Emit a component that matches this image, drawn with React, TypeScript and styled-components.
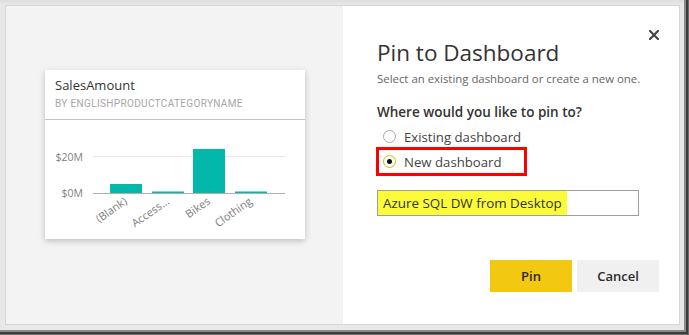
import React from "react";
import styled, { createGlobalStyle } from "styled-components";

const Global = createGlobalStyle`
  html, body { margin: 0; padding: 0; background: #ffffff; }
  body { font-family: "Open Sans", "Noto Sans", Arial, sans-serif; }
  * { box-sizing: border-box; }
`;

const Frame = styled.div`
  width: 689px;
  height: 335px;
  padding: 5px 9px 10px 5px;
  background: linear-gradient(180deg, #dedede 0px, #e8e8e8 5px, #e8e8e8 100%);
  box-shadow: inset -1px -1px 0 #6a6a6a, inset -3px -3px 0 #3c3c3c,
    inset -5px -5px 0 #8a8a8a;
  display: flex;
`;

const Screen = styled.div`
  flex: 1;
  display: flex;
  border: 1px solid #d6d6d6;
  background: #f3f3f3;
  overflow: hidden;
`;

const LeftPane = styled.div`
  width: 337px;
  background: #f3f3f3;
  padding: 64px 0 0 39px;
`;

const Card = styled.div`
  width: 260px;
  height: 169px;
  background: #ffffff;
  box-shadow: 0 2px 6px rgba(0, 0, 0, 0.22);
  display: flex;
  flex-direction: column;
`;

const CardHeader = styled.div`
  padding: 7px 10px 9px 10px;
  border-bottom: 1px solid #c4c4c4;
`;

const CardTitle = styled.div`
  font-family: "Open Sans", sans-serif;
  font-size: 13px;
  line-height: 17px;
  color: #333333;
`;

const CardSubtitle = styled.div`
  margin-top: 4px;
  font-family: Roboto, "Liberation Sans", sans-serif;
  font-size: 10px;
  line-height: 12px;
  letter-spacing: 0.35px;
  color: #a6a6a6;
  text-transform: uppercase;
`;

const ChartSvg = styled.svg`
  display: block;
  flex: 1;
`;

const Dialog = styled.div`
  flex: 1;
  background: #ffffff;
  padding: 22px 20px 0 34px;
  display: flex;
  flex-direction: column;
`;

const CloseRow = styled.div`
  display: flex;
  justify-content: flex-end;
  height: 10px;
`;

const CloseButton = styled.button`
  width: 10px;
  height: 10px;
  padding: 0;
  border: none;
  background: none;
  display: block;
  cursor: pointer;
`;

const Title = styled.h1`
  margin: 0;
  font-family: "Open Sans", sans-serif;
  font-weight: 400;
  font-size: 22.5px;
  line-height: 30px;
  color: #333333;
`;

const Subtitle = styled.p`
  margin: 3px 0 0 0;
  font-size: 11.4px;
  line-height: 15px;
  color: #666666;
`;

const Question = styled.div`
  margin-top: 17px;
  font-size: 13.5px;
  font-weight: 600;
  line-height: 18px;
  color: #333333;
`;

const Options = styled.div`
  margin-top: 4px;
  display: flex;
  flex-direction: column;
  align-items: flex-start;
  gap: 2px;
`;

const OptionRow = styled.label<{ $marked?: boolean }>`
  display: flex;
  align-items: center;
  gap: 8px;
  height: 23px;
  margin-left: 2px;
  padding: 0 22px 0 4px;
  font-size: 13.2px;
  color: #444444;
  outline: ${(p) => (p.$marked ? "3px solid #ff0000" : "none")};
`;

const Radio = styled.span<{ $checked?: boolean }>`
  width: 13px;
  height: 13px;
  border-radius: 50%;
  border: 1.5px solid ${(p) => (p.$checked ? "#e8b10a" : "#a8a8a8")};
  display: flex;
  align-items: center;
  justify-content: center;
  background: #ffffff;
  &::after {
    content: "";
    width: 5px;
    height: 5px;
    border-radius: 50%;
    background: ${(p) => (p.$checked ? "#111111" : "transparent")};
  }
`;

const TextBox = styled.div`
  margin-top: 17px;
  width: 262px;
  height: 26px;
  border: 1px solid #9e9e9e;
  display: flex;
  align-items: stretch;
`;

const Highlight = styled.span`
  background: #fbfb3a;
  padding: 0 5px 0 5px;
  display: flex;
  align-items: center;
  font-size: 13.4px;
  color: #333333;
`;

const Buttons = styled.div`
  margin-top: 44px;
  display: flex;
  justify-content: flex-end;
  gap: 5px;
`;

const Button = styled.button<{ $primary?: boolean }>`
  width: 82px;
  height: 32px;
  border: none;
  font-family: "Open Sans", sans-serif;
  font-size: 13px;
  font-weight: 600;
  color: #2b2b2b;
  background: ${(p) => (p.$primary ? "#f2c811" : "#f0f0f0")};
`;

const bars = [
  { label: "(Blank)", x: 65, top: 64 },
  { label: "Access...", x: 107, top: 71.5 },
  { label: "Bikes", x: 148, top: 29 },
  { label: "Clothing", x: 190, top: 71.5 },
];

function Chart() {
  return (
    <ChartSvg width="260" height="119" viewBox="0 0 260 119">
      <line x1="48" y1="36.5" x2="240" y2="36.5" stroke="#e8e8e8" strokeWidth="1" />
      <text x="38" y="40.5" textAnchor="end" fontSize="10.5" fill="#808080" fontFamily="Open Sans, sans-serif">
        $20M
      </text>
      <text x="38" y="77" textAnchor="end" fontSize="10.5" fill="#808080" fontFamily="Open Sans, sans-serif">
        $0M
      </text>
      {bars.map((b) => (
        <rect key={b.label} x={b.x} y={b.top} width="32" height={73 - b.top} fill="#01b8aa" />
      ))}
      <line x1="48" y1="73.5" x2="240" y2="73.5" stroke="#b0b0b0" strokeWidth="1" />
      {bars.map((b) => (
        <text
          key={b.label + "-l"}
          x={b.x + 18}
          y={83}
          textAnchor="end"
          fontSize="11"
          fill="#808080"
          fontFamily="Open Sans, sans-serif"
          transform={`rotate(-35 ${b.x + 18} 83)`}
        >
          {b.label}
        </text>
      ))}
    </ChartSvg>
  );
}

export default function App() {
  return (
    <>
      <Global />
      <Frame>
        <Screen>
          <LeftPane>
            <Card>
              <CardHeader>
                <CardTitle>SalesAmount</CardTitle>
                <CardSubtitle>By EnglishProductCategoryName</CardSubtitle>
              </CardHeader>
              <Chart />
            </Card>
          </LeftPane>
          <Dialog>
            <CloseRow>
              <CloseButton aria-label="Close">
                <svg width="10" height="10" viewBox="0 0 10 10">
                  <path d="M1 1 L9 9 M9 1 L1 9" stroke="#444" strokeWidth="2.2" strokeLinecap="square" />
                </svg>
              </CloseButton>
            </CloseRow>
            <Title>Pin to Dashboard</Title>
            <Subtitle>Select an existing dashboard or create a new one.</Subtitle>
            <Question>Where would you like to pin to?</Question>
            <Options>
              <OptionRow>
                <Radio />
                Existing dashboard
              </OptionRow>
              <OptionRow $marked>
                <Radio $checked />
                New dashboard
              </OptionRow>
            </Options>
            <TextBox>
              <Highlight>Azure SQL DW from Desktop</Highlight>
            </TextBox>
            <Buttons>
              <Button $primary>Pin</Button>
              <Button>Cancel</Button>
            </Buttons>
          </Dialog>
        </Screen>
      </Frame>
    </>
  );
}
